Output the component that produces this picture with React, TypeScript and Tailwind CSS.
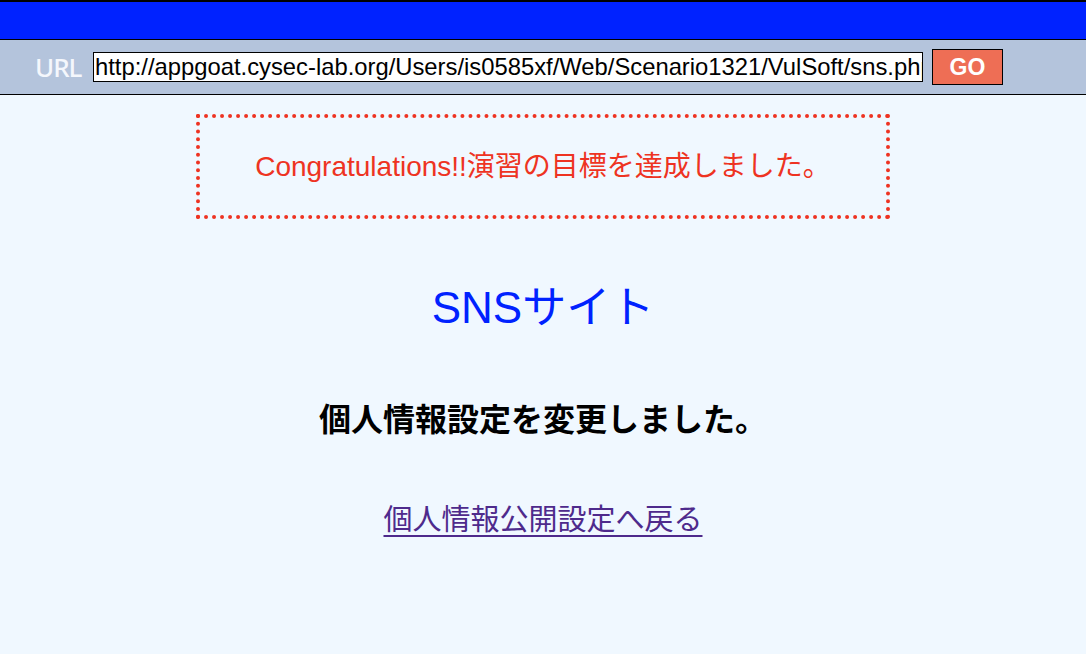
export default function App() {
    const jp = { fontFamily: '"Liberation Sans", "Noto Sans CJK JP", sans-serif' };
    return (
        <div className="min-h-[654px] bg-[#f0f8ff] flex flex-col" style={jp}>
            <div className="h-[40px] bg-[#0022ff] border-t-2 border-b border-black" />
            <div className="h-[55px] bg-[#b4c4dc] border-b border-black flex items-center pl-[35px]">
                <span className="w-[50px] text-[26px] font-medium tracking-[-1px] text-[#f4f7fc] leading-none" style={{ fontFamily: '"Noto Sans", sans-serif' }}>URL</span>
                <div className="ml-[8px] w-[830px] h-[30px] bg-white border border-black px-[1px] flex items-center overflow-hidden whitespace-nowrap text-[23.8px] text-black leading-none">
                    http://appgoat.cysec-lab.org/Users/is0585xf/Web/Scenario1321/VulSoft/sns.php
                </div>
                <button className="ml-[9px] w-[71px] h-[36px] bg-[#ee6e55] border border-black text-white font-bold text-[23px] leading-none">GO</button>
            </div>

            <div className="flex flex-col items-center">
                <div className="mt-[19px] w-[694px] h-[105px] border-4 border-dotted border-[#ee3322] flex items-center justify-center">
                    <p className="text-[28px] text-[#ee3322]">Congratulations!!演習の目標を達成しました。</p>
                </div>

                <h1 className="mt-[64px] text-[44px] leading-[50px] text-[#0022ff]">SNSサイト</h1>

                <p className="mt-[67px] text-[32px] leading-[40px] font-bold text-black">個人情報設定を変更しました。</p>

                <a href="#" className="mt-[62px] text-[29px] leading-[36px] text-[#4e2a8c] underline underline-offset-[5px] decoration-[2px]">
                    個人情報公開設定へ戻る
                </a>
            </div>
        </div>
    );
}
